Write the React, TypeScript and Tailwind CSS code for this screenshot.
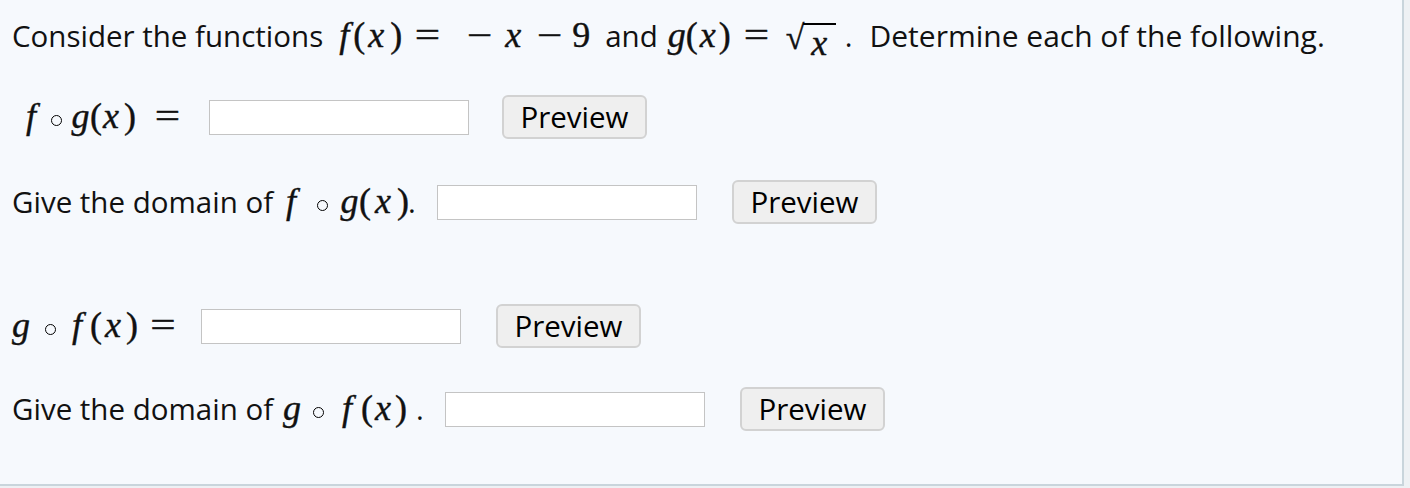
// math runs are set in a Times-like serif, as a stand-in for the TeX font
function M({ children, className = "" }: { children: React.ReactNode; className?: string }) {
  return (
    <span className={"font-['Liberation_Serif',serif] text-[36px] leading-none [-webkit-text-stroke:0.4px] " + className}>
      {children}
    </span>
  );
}

// one math glyph in a fixed-width box, so spacing follows the rendered TeX
function G({ c, w, it = false }: { c: string; w: string; it?: boolean }) {
  return <span className={"inline-block text-center " + w + (it ? " italic" : "")}>{c}</span>;
}

// = and − are wider in the TeX font
function Op({ c, w }: { c: string; w: string }) {
  return <span className={"inline-block text-center scale-x-125 " + w}>{c}</span>;
}

function Ring({ w }: { w: string }) {
  return (
    <span className={"inline-flex justify-center relative top-[-2px] " + w}>
      <span className="inline-block w-[11px] h-[11px] rounded-full border-[1.5px] border-black" />
    </span>
  );
}

function Box() {
  return <input type="text" className="w-[260px] h-[35px] bg-white border border-[#c4c4c4]" />;
}

function Preview({ ml }: { ml: string }) {
  return (
    <button
      className={
        "w-[145px] h-[44px] rounded-[6px] bg-[#efefef] border-2 border-[#d2d2d2] text-[29.5px] text-black leading-none " + ml
      }
    >
      Preview
    </button>
  );
}

export default function App() {
  return (
    <div className="w-[1410px] h-[488px] bg-[#eef1f4]">
      <div className="w-[1404px] h-[486px] bg-[#f6f9fd] border-r-2 border-b-2 border-[#c9d5dc] pl-[12px] pt-[14px] text-[#111] text-[29.5px] font-['Open_Sans','Noto_Sans',sans-serif]">
        {/* question */}
        <div className="h-[44px] flex items-center whitespace-nowrap">
          <span>
            Consider the functions
            <M className="ml-[12px]">
              <G c="f" w="w-[18px]" it />
              <G c="(" w="w-[11px]" />
              <G c="x" w="w-[24px]" it />
              <span className="ml-[2px]" />
              <G c=")" w="w-[11px]" />
              <span className="ml-[13px]" />
              <Op c="=" w="w-[27px]" />
              <span className="ml-[25px]" />
              <Op c="−" w="w-[27px]" />
              <span className="ml-[7px]" />
              <G c="x" w="w-[26px]" it />
              <span className="ml-[10px]" />
              <Op c="−" w="w-[27px]" />
              <span className="ml-[9px]" />
              <G c="9" w="w-[17px]" />
            </M>
            <span className="ml-[16px]">and</span>
            <M className="ml-[10px]">
              <G c="g" w="w-[18px]" it />
              <G c="(" w="w-[11px]" />
              <G c="x" w="w-[22px]" it />
              <G c=")" w="w-[11px]" />
              <span className="ml-[13px]" />
              <Op c="=" w="w-[27px]" />
              <span className="ml-[16px]" />
              <span className="inline-flex items-start">
                <span className="w-[17px] text-[34px] relative top-[2px]">√</span>
                <span className="w-[33px] text-center border-t-2 border-black italic relative top-[4px]">x</span>
              </span>
            </M>
            <span className="ml-[9px]">.</span>
            <span className="ml-[17px] text-[30px]">Determine each of the following.</span>
          </span>
        </div>

        {/* f o g */}
        <div className="mt-[37px] h-[44px] flex items-center whitespace-nowrap">
          <span className="w-[197px] pl-[8px]">
            <M>
              <G c="f" w="w-[22px]" it />
              <span className="ml-[3px]" />
              <Ring w="w-[22px]" />
              <span className="ml-[4px]" />
              <G c="g" w="w-[19px]" it />
              <G c="(" w="w-[10px]" />
              <G c="x" w="w-[22px]" it />
              <span className="ml-[2px]" />
              <G c=")" w="w-[11px]" />
              <span className="ml-[18px]" />
              <Op c="=" w="w-[29px]" />
            </M>
          </span>
          <Box />
          <Preview ml="ml-[33px]" />
        </div>

        {/* domain f o g */}
        <div className="mt-[41px] h-[44px] flex items-center whitespace-nowrap">
          <span className="w-[425px]">
            Give the domain of
            <M className="ml-[9px]">
              <G c="f" w="w-[18px]" it />
              <span className="ml-[11px]" />
              <Ring w="w-[22px]" />
              <span className="ml-[7px]" />
              <G c="g" w="w-[19px]" it />
              <G c="(" w="w-[10px]" />
              <span className="ml-[3px]" />
              <G c="x" w="w-[22px]" it />
              <span className="ml-[3px]" />
              <G c=")" w="w-[11px]" />
            </M>
            <span>.</span>
          </span>
          <Box />
          <Preview ml="ml-[35px]" />
        </div>

        {/* g o f */}
        <div className="mt-[80px] h-[44px] flex items-center whitespace-nowrap">
          <span className="w-[189px]">
            <M>
              <G c="g" w="w-[18px]" it />
              <span className="ml-[9px]" />
              <Ring w="w-[22px]" />
              <span className="ml-[4px]" />
              <G c="f" w="w-[24px]" it />
              <span className="ml-[1px]" />
              <G c="(" w="w-[10px]" />
              <span className="ml-[2px]" />
              <G c="x" w="w-[22px]" it />
              <span className="ml-[2px]" />
              <G c=")" w="w-[11px]" />
              <span className="ml-[13px]" />
              <Op c="=" w="w-[26px]" />
            </M>
          </span>
          <Box />
          <Preview ml="ml-[35px]" />
        </div>

        {/* domain g o f */}
        <div className="mt-[39px] h-[44px] flex items-center whitespace-nowrap">
          <span className="w-[433px]">
            Give the domain of
            <M className="ml-[10px]">
              <G c="g" w="w-[16px]" it />
              <span className="ml-[8px]" />
              <Ring w="w-[22px]" />
              <span className="ml-[8px]" />
              <G c="f" w="w-[20px]" it />
              <span className="ml-[4px]" />
              <G c="(" w="w-[10px]" />
              <span className="ml-[1px]" />
              <G c="x" w="w-[22px]" it />
              <span className="ml-[1px]" />
              <G c=")" w="w-[11px]" />
            </M>
            <span className="ml-[10px]">.</span>
          </span>
          <Box />
          <Preview ml="ml-[35px]" />
        </div>
      </div>
    </div>
  );
}
